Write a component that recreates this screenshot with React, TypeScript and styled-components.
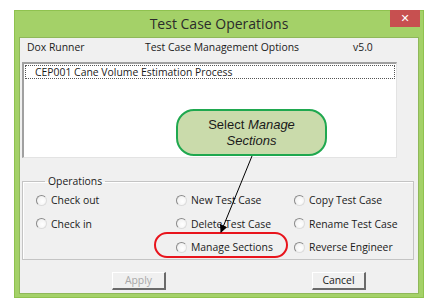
import React from "react";
import styled, { createGlobalStyle } from "styled-components";

const Global = createGlobalStyle`
  html, body { margin: 0; padding: 0; background: #ffffff; }
  body { font-family: "Open Sans", "Liberation Sans", sans-serif; }
`;

const Window = styled.div`
  margin: 10px 0 0 14px;
  width: 410px;
  height: 288px;
  box-sizing: border-box;
  background: #a4d168;
  border: 1px solid #8fc24f;
  padding: 0 4px 3px 4px;
  display: flex;
  flex-direction: column;
`;

const TitleBar = styled.div`
  height: 26px;
  display: grid;
  grid-template-columns: 1fr auto 1fr;
  align-items: start;
`;

const Title = styled.div`
  grid-column: 2;
  font-family: "Open Sans", sans-serif;
  font-size: 14px;
  line-height: 24px;
  color: #2b2b2b;
  padding-top: 1px;
`;

const CloseButton = styled.div`
  grid-column: 3;
  justify-self: end;
  width: 30px;
  height: 17px;
  margin-top: -1px;
  margin-right: -1px;
  background: #c75050;
  color: #fff;
  font-family: "DejaVu Sans", sans-serif;
  font-weight: bold;
  font-size: 11px;
  display: flex;
  align-items: center;
  justify-content: center;
`;

const Body = styled.div`
  flex: 1;
  position: relative;
  background: #f0f0f0;
  border: 1px solid #8fb85a;
  font-family: "Open Sans", sans-serif;
  font-size: 10.4px;
  color: #1b1b1b;
  display: flex;
  flex-direction: column;
`;

const Header = styled.div`
  display: grid;
  grid-template-columns: 118px 208px auto;
  padding: 0 0 0 7px;
  height: 22px;
  box-sizing: border-box;
  line-height: 18px;
`;

const ListBox = styled.div`
  margin: 2px 0 0 2px;
  width: 375px;
  height: 96px;
  box-sizing: border-box;
  background: #fff;
  border-top: 2px solid #a0a0a0;
  border-left: 2px solid #a0a0a0;
  border-right: 1px solid #e3e3e3;
  border-bottom: 1px solid #e3e3e3;
  padding: 1px 1px;
`;

const ListItem = styled.div`
  height: 14px;
  line-height: 13px;
  border: 1px dotted #555;
  padding-left: 9px;
  box-sizing: border-box;
`;

const GroupBox = styled.fieldset`
  margin: 16px 0 0 2px;
  width: 392px;
  box-sizing: border-box;
  border: 1px solid #c4c4c4;
  box-shadow: inset 1px 1px 0 #fff;
  padding: 0 0 0 13px;
  display: grid;
  grid-template-columns: 140px 118px auto;
  grid-template-rows: 24px 23px 24px;
  align-items: center;
`;

const Legend = styled.legend`
  padding: 0 3px;
  margin-left: 9px;
  line-height: 14px;
`;

const Radio = styled.label<{ $col: number }>`
  grid-column: ${(p) => p.$col};
  display: flex;
  align-items: center;
  gap: 4px;
  white-space: nowrap;
`;

const Dot = styled.span`
  width: 11px;
  height: 11px;
  border-radius: 50%;
  box-sizing: border-box;
  border: 1px solid #8a8a8a;
  border-right-color: #dcdcdc;
  border-bottom-color: #dcdcdc;
  background: radial-gradient(circle at 60% 60%, #ffffff 0%, #f4f4f4 60%, #e2e2e2 100%);
  flex: none;
`;

const ButtonRow = styled.div`
  display: grid;
  grid-template-columns: 54px 54px;
  column-gap: 146px;
  padding-left: 92px;
  margin-top: 12px;
`;

const Button = styled.div<{ $disabled?: boolean }>`
  height: 18px;
  box-sizing: border-box;
  border: 1px solid #fff;
  border-right: 2px solid #6a6a6a;
  border-bottom: 2px solid #6a6a6a;
  background: #f0f0f0;
  text-align: center;
  line-height: 14px;
  color: ${(p) => (p.$disabled ? "#a8a8a8" : "#1b1b1b")};
`;

const Callout = styled.div`
  position: absolute;
  left: 156px;
  top: 71px;
  width: 151px;
  height: 47px;
  box-sizing: border-box;
  border: 2px solid #1fa84f;
  border-radius: 18px;
  background: #cadbab;
  font-family: "Liberation Sans", Arial, sans-serif;
  font-size: 13px;
  line-height: 16px;
  color: #1a1a1a;
  display: flex;
  align-items: center;
  justify-content: center;
  text-align: center;
`;

const Highlight = styled.div`
  position: absolute;
  left: 134px;
  top: 194px;
  width: 134px;
  height: 26px;
  box-sizing: border-box;
  border: 2px solid #e8141c;
  border-radius: 13px;
`;

const ArrowLayer = styled.svg`
  position: absolute;
  left: 0;
  top: 0;
  pointer-events: none;
`;

export default function App() {
  return (
    <>
      <Global />
      <Window>
        <TitleBar>
          <Title>Test Case Operations</Title>
          <CloseButton>✕</CloseButton>
        </TitleBar>
        <Body>
          <Header>
            <span>Dox Runner</span>
            <span>Test Case Management Options</span>
            <span>v5.0</span>
          </Header>
          <ListBox>
            <ListItem>CEP001 Cane Volume Estimation Process</ListItem>
          </ListBox>
          <GroupBox>
            <Legend>Operations</Legend>
            <Radio $col={1}><Dot />Check out</Radio>
            <Radio $col={2}><Dot />New Test Case</Radio>
            <Radio $col={3}><Dot />Copy Test Case</Radio>
            <Radio $col={1}><Dot />Check in</Radio>
            <Radio $col={2}><Dot />Delete Test Case</Radio>
            <Radio $col={3}><Dot />Rename Test Case</Radio>
            <Radio $col={2}><Dot />Manage Sections</Radio>
            <Radio $col={3}><Dot />Reverse Engineer</Radio>
          </GroupBox>
          <ButtonRow>
            <Button $disabled>Apply</Button>
            <Button>Cancel</Button>
          </ButtonRow>
          <Callout>
            <div>
              Select <i>Manage</i>
              <br />
              <i>Sections</i>
            </div>
          </Callout>
          <Highlight />
          <ArrowLayer width="400" height="258" viewBox="0 0 400 258">
            <defs>
              <marker id="ah" markerWidth="8" markerHeight="8" refX="7" refY="4" orient="auto" markerUnits="userSpaceOnUse">
                <path d="M0,0 L8,4 L0,8 Z" fill="#000" />
              </marker>
            </defs>
            <line x1="232" y1="118" x2="201" y2="194" stroke="#000" strokeWidth="1" markerEnd="url(#ah)" />
          </ArrowLayer>
        </Body>
      </Window>
    </>
  );
}
